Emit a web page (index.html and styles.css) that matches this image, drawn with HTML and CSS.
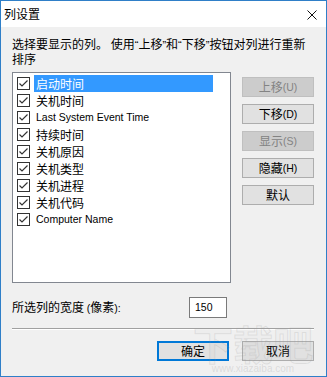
FILE: index.html
```html
<!DOCTYPE html>
<html lang="zh">
<head>
<meta charset="utf-8">
<title>列设置</title>
<link rel="stylesheet" href="styles.css">
</head>
<body>
<div class="window">
  <div class="titlebar">
    <span class="title">列设置</span>
    <svg class="close" width="10" height="10" viewBox="0 0 10 10"><path d="M0.5 0.5 L9.5 9.5 M9.5 0.5 L0.5 9.5" stroke="#111" stroke-width="1" fill="none"/></svg>
  </div>
  <div class="content">
    <p class="intro">选择要显示的列。 使用<span class="q">“</span>上移<span class="q">”</span>和<span class="q">“</span>下移<span class="q">”</span>按钮对列进行重新<br>排序</p>
    <div class="main">
      <div class="listbox">
        <div class="row"><span class="cb"><svg width="13" height="13" viewBox="0 0 13 13"><path d="M2.5 6.5 L5 9 L10.5 3.5" stroke="#333" stroke-width="1.2" fill="none"/></svg></span><span class="label selected">启动时间</span></div>
        <div class="row"><span class="cb"><svg width="13" height="13" viewBox="0 0 13 13"><path d="M2.5 6.5 L5 9 L10.5 3.5" stroke="#333" stroke-width="1.2" fill="none"/></svg></span><span class="label">关机时间</span></div>
        <div class="row"><span class="cb"><svg width="13" height="13" viewBox="0 0 13 13"><path d="M2.5 6.5 L5 9 L10.5 3.5" stroke="#333" stroke-width="1.2" fill="none"/></svg></span><span class="label lat">Last System Event Time</span></div>
        <div class="row"><span class="cb"><svg width="13" height="13" viewBox="0 0 13 13"><path d="M2.5 6.5 L5 9 L10.5 3.5" stroke="#333" stroke-width="1.2" fill="none"/></svg></span><span class="label">持续时间</span></div>
        <div class="row"><span class="cb"><svg width="13" height="13" viewBox="0 0 13 13"><path d="M2.5 6.5 L5 9 L10.5 3.5" stroke="#333" stroke-width="1.2" fill="none"/></svg></span><span class="label">关机原因</span></div>
        <div class="row"><span class="cb"><svg width="13" height="13" viewBox="0 0 13 13"><path d="M2.5 6.5 L5 9 L10.5 3.5" stroke="#333" stroke-width="1.2" fill="none"/></svg></span><span class="label">关机类型</span></div>
        <div class="row"><span class="cb"><svg width="13" height="13" viewBox="0 0 13 13"><path d="M2.5 6.5 L5 9 L10.5 3.5" stroke="#333" stroke-width="1.2" fill="none"/></svg></span><span class="label">关机进程</span></div>
        <div class="row"><span class="cb"><svg width="13" height="13" viewBox="0 0 13 13"><path d="M2.5 6.5 L5 9 L10.5 3.5" stroke="#333" stroke-width="1.2" fill="none"/></svg></span><span class="label">关机代码</span></div>
        <div class="row"><span class="cb"><svg width="13" height="13" viewBox="0 0 13 13"><path d="M2.5 6.5 L5 9 L10.5 3.5" stroke="#333" stroke-width="1.2" fill="none"/></svg></span><span class="label lat">Computer Name</span></div>
      </div>
      <div class="side">
        <div class="btn disabled">上移<span class="lat">(U)</span></div>
        <div class="btn">下移<span class="lat">(D)</span></div>
        <div class="btn disabled">显示<span class="lat">(S)</span></div>
        <div class="btn">隐藏<span class="lat">(H)</span></div>
        <div class="btn">默认</div>
      </div>
    </div>
    <div class="width-row">
      <span class="width-label">所选列的宽度 <span class="lat">(</span>像素<span class="lat">):</span></span>
      <div class="input lat">150</div>
    </div>
    <div class="separator"></div>
    <div class="footer">
      <div class="btn default">确定</div>
      <div class="btn">取消</div>
    </div>
  </div>
  <div class="watermark">
    <span class="wm-big">下载吧</span>
    <span class="wm-url">www.xiazaiba.com</span>
  </div>
</div>
</body>
</html>
```
FILE: styles.css
```css
* { box-sizing: border-box; }
html, body { margin: 0; padding: 0; }
body {
  font-family: "Noto Sans CJK SC", "Noto Sans", sans-serif;
  font-size: 12px;
  color: #000;
  background: #f0f0f0;
}
.lat {
  font-family: "Liberation Sans", Arial, sans-serif;
  font-size: 10.5px;
}
.window {
  position: relative;
  width: 327px;
  height: 377px;
  border: 1px solid #2f7fc8;
  background: #f0f0f0;
  overflow: hidden;
}
.titlebar {
  height: 26px;
  background: #fff;
  display: flex;
  align-items: center;
  justify-content: space-between;
  padding: 0 9px 0 3px;
}
.title { line-height: 14px; font-size: 12px; color: #000; }
.close { display: block; margin-top: 2px; }
.content {
  padding: 0 12px 0 11px;
}
.intro {
  margin: 10px 0 0 0;
  line-height: 14px;
  white-space: nowrap;
}
.q { font-family: "Liberation Sans", sans-serif; font-size: 11px; }
.main {
  display: flex;
  margin-top: 6px;
}
.listbox {
  width: 219px;
  height: 211px;
  background: #fff;
  border: 1px solid #828790;
  padding: 2px 0 0 4px;
}
.row {
  display: flex;
  align-items: center;
  height: 17px;
}
.cb {
  width: 13px;
  height: 13px;
  border: 1px solid #333;
  background: #fff;
  display: flex;
  align-items: center;
  justify-content: center;
  flex: none;
}
.cb svg { display: block; margin: -1px; }
.label {
  margin-left: 4px;
  width: 179px;
  height: 17px;
  line-height: 17px;
  padding-left: 2px;
  white-space: nowrap;
}
.label.lat { font-size: 10.5px; }
.label.selected { background: #3399ff; color: #fff; }
.side {
  margin-left: 11px;
  margin-top: 5px;
  display: flex;
  flex-direction: column;
  gap: 7px;
}
.btn {
  width: 72px;
  height: 20px;
  background: #e1e1e1;
  border: 1px solid #adadad;
  display: flex;
  align-items: center;
  justify-content: center;
  line-height: 14px;
  color: #000;
}
.btn.disabled {
  background: #cccccc;
  border-color: #bfbfbf;
  color: #838383;
}
.btn.default {
  border: 2px solid #0078d7;
}
.width-row {
  display: flex;
  align-items: center;
  margin-top: 14px;
}
.width-label { width: 177px; line-height: 14px; }
.input {
  width: 38px;
  height: 21px;
  background: #fff;
  border: 1px solid #7a7a7a;
  padding-left: 5px;
  line-height: 19px;
}
.separator {
  margin-top: 10px;
  height: 2px;
  border-top: 1px solid #a0a0a0;
  border-bottom: 1px solid #fff;
}
.footer {
  margin-top: 11px;
  display: flex;
  justify-content: flex-end;
  gap: 13px;
}
.watermark {
  position: absolute;
  right: 8px;
  bottom: 2px;
  width: 130px;
  height: 52px;
  pointer-events: none;
  display: flex;
  flex-direction: column;
  align-items: center;
}
.wm-big {
  font-size: 40px;
  line-height: 42px;
  font-weight: 700;
  color: rgba(160,160,160,0.05);
  -webkit-text-stroke: 1px rgba(150,150,150,0.2);
}
.wm-url {
  font-family: "Liberation Sans", sans-serif;
  font-size: 10px;
  line-height: 10px;
  color: rgba(150,150,150,0.25);
}
```
